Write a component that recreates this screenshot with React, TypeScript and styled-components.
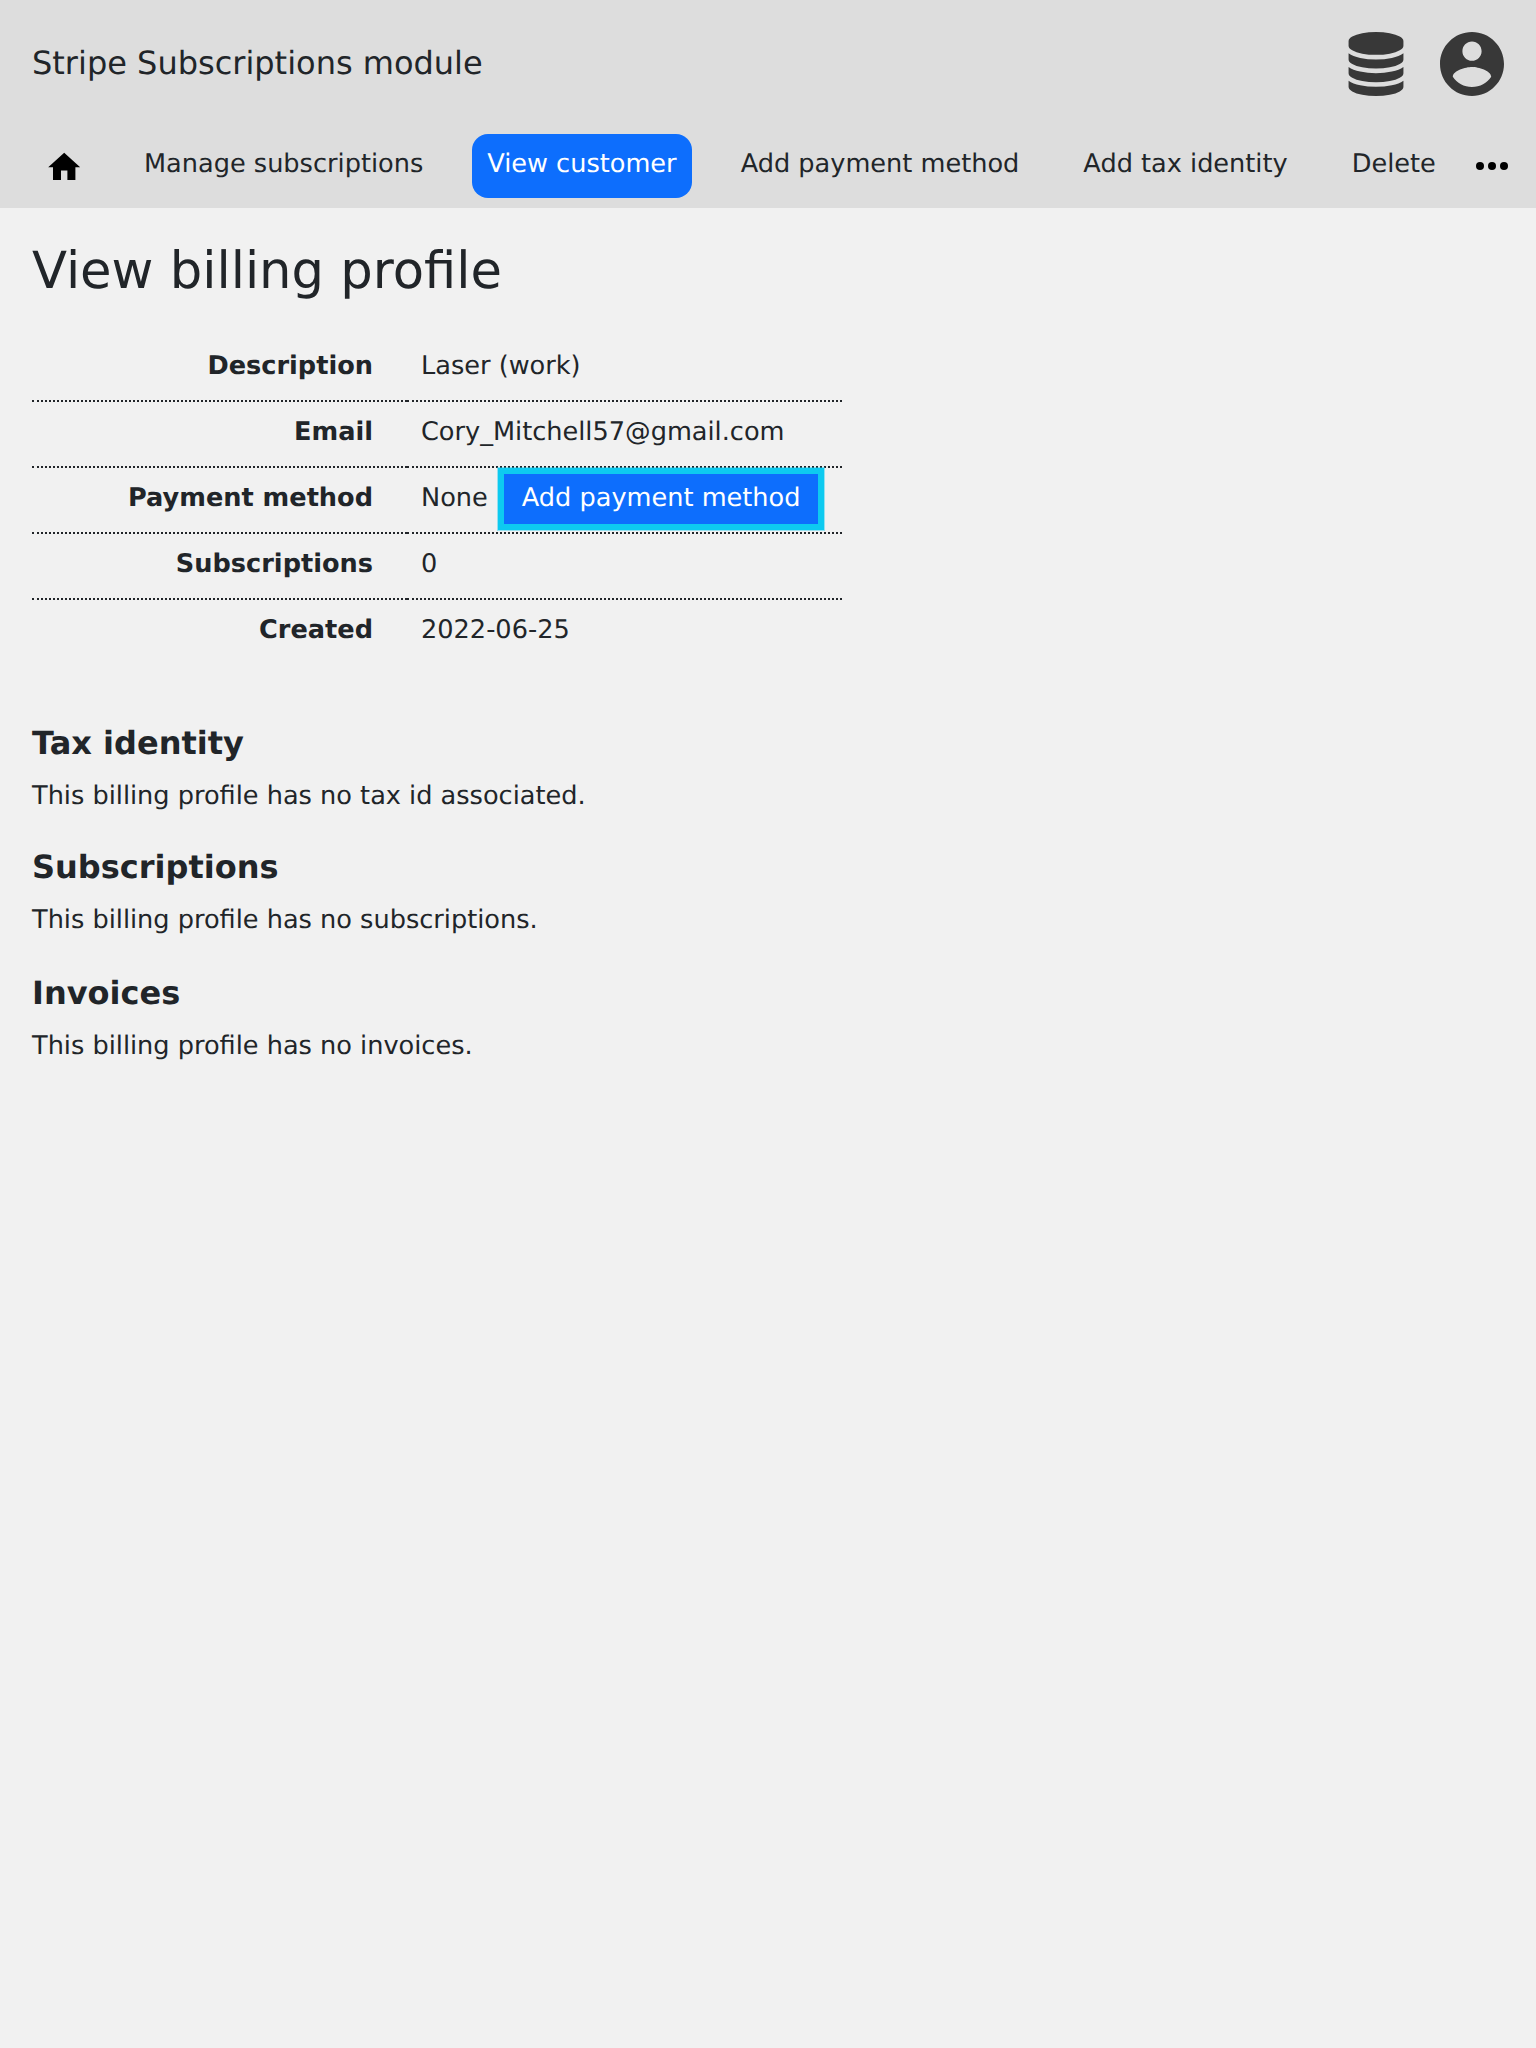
import React from "react";
import styled, { createGlobalStyle } from "styled-components";

const GlobalStyle = createGlobalStyle`
  *, *::before, *::after { box-sizing: border-box; }
  html { background: #f1f1f1; }
  body {
    margin: 0;
    background: #f1f1f1;
    color: #212529;
    font-family: "DejaVu Sans", sans-serif;
    font-size: 25.6px;
    line-height: 38.4px;
    text-rendering: geometricPrecision;
  }
`;

const Page = styled.div`
  min-height: 2048px;
`;

const Header = styled.header`
  height: 208px;
  background: #ddd;
`;

const TitleBar = styled.div`
  display: flex;
  align-items: center;
  justify-content: space-between;
  height: 134px;
  padding: 0 32px 6px;
`;

const AppTitle = styled.div`
  font-size: 32px;
  line-height: 48px;
  padding-bottom: 2px;
`;

const Tools = styled.div`
  display: flex;
  gap: 36px;
  color: #383838;
`;

const Icon = styled.svg`
  display: block;
  flex: none;
  fill: currentColor;
`;

const Nav = styled.nav`
  display: flex;
  gap: 34px;
  height: 64px;
  padding-left: 32px;
`;

const NavLink = styled.a<{ $active?: boolean }>`
  flex: none;
  height: 64px;
  padding: 0 15px;
  border-radius: 16px;
  line-height: 60px;
  white-space: nowrap;
  color: ${(p) => (p.$active ? "#fff" : "inherit")};
  background: ${(p) => (p.$active ? "#0d6efd" : "transparent")};
`;

const HomeLink = styled.a`
  flex: none;
  display: flex;
  justify-content: center;
  width: 64px;
  margin-right: -1px;
  padding-top: 14px;
  color: #000;
`;

const MoreLink = styled.a`
  flex: none;
  margin: 28px 0 0 -8.6px;
  color: #000;
`;

const Main = styled.main`
  padding: 24px 32px 0;
`;

const PageTitle = styled.h1`
  margin: 0;
  font-size: 51.2px;
  font-weight: 400;
  line-height: 78px;
`;

const Details = styled.table`
  width: 810px;
  margin-top: 25px;
  border-collapse: collapse;
  table-layout: fixed;

  tr:not(:last-child) > * {
    border-bottom: 2px dotted #212529;
  }
  th, td {
    height: 66px;
    padding-bottom: 3.6px;
  }
  tr:first-child > * {
    padding-bottom: 2.6px;
  }
  tr:last-child > * {
    padding-bottom: 4.6px;
  }
`;

const Label = styled.th`
  width: 375px;
  padding: 0 34px 0 0;
  text-align: right;
  font-weight: 700;
`;

const Value = styled.td`
  padding: 0 0 0 14px;
  white-space: nowrap;
`;

const ActionButton = styled.a`
  margin-left: 1.6px;
  padding: 9px 17.7px 11px 18.3px;
  border: 6px solid #0dcaf0;
  box-shadow: 0 0 0 1px rgba(13, 202, 240, 0.4);
  background: #0d6efd;
  color: #fff;
`;

const Section = styled.section<{ $gap: number }>`
  margin-top: ${(p) => p.$gap}px;
`;

const SectionTitle = styled.h2`
  margin: 0;
  font-size: 32px;
  font-weight: 700;
  line-height: 48px;
`;

const SectionText = styled.p`
  margin: 10px 0 0;
`;

const details: { label: string; value: React.ReactNode }[] = [
  { label: "Description", value: "Laser (work)" },
  { label: "Email", value: "Cory_Mitchell57@gmail.com" },
  {
    label: "Payment method",
    value: (
      <>
        None <ActionButton>Add payment method</ActionButton>
      </>
    ),
  },
  { label: "Subscriptions", value: "0" },
  { label: "Created", value: "2022-06-25" },
];

const sections = [
  { title: "Tax identity", text: "This billing profile has no tax id associated.", gap: 54 },
  { title: "Subscriptions", text: "This billing profile has no subscriptions.", gap: 27.6 },
  { title: "Invoices", text: "This billing profile has no invoices.", gap: 29.6 },
];

export default function App() {
  return (
    <Page>
      <GlobalStyle />
      <Header>
        <TitleBar>
          <AppTitle>Stripe Subscriptions module</AppTitle>
          <Tools>
            <Icon width="56" height="64" viewBox="0 0 1536 1792">
              <path d="M768 768q237 0 443-43t325-127v170q0 69-103 128t-280 93.5-385 34.5-385-34.5-280-93.5-103-128v-170q119 84 325 127t443 43zm0 768q237 0 443-43t325-127v170q0 69-103 128t-280 93.5-385 34.5-385-34.5-280-93.5-103-128v-170q119 84 325 127t443 43zm0-384q237 0 443-43t325-127v170q0 69-103 128t-280 93.5-385 34.5-385-34.5-280-93.5-103-128v-170q119 84 325 127t443 43zm0-1152q208 0 385 34.5t280 93.5 103 128v128q0 69-103 128t-280 93.5-385 34.5-385-34.5-280-93.5-103-128v-128q0-69 103-128t280-93.5 385-34.5z" />
            </Icon>
            <Icon width="64" height="64" viewBox="2 2 20 20">
              <path d="M12 2C6.48 2 2 6.48 2 12s4.48 10 10 10 10-4.48 10-10S17.52 2 12 2zm0 3c1.66 0 3 1.34 3 3s-1.34 3-3 3-3-1.34-3-3 1.34-3 3-3zm0 14.2c-2.5 0-4.71-1.28-6-3.22.03-1.99 4-3.08 6-3.08 1.99 0 5.97 1.09 6 3.08-1.29 1.94-3.5 3.22-6 3.22z" />
            </Icon>
          </Tools>
        </TitleBar>
        <Nav>
          <HomeLink>
            <Icon width="38.4" height="38.4" viewBox="0 0 24 24">
              <path d="M10 20v-6h4v6h5v-8h3L12 3 2 12h3v8z" />
            </Icon>
          </HomeLink>
          <NavLink>Manage subscriptions</NavLink>
          <NavLink $active>View customer</NavLink>
          <NavLink>Add payment method</NavLink>
          <NavLink>Add tax identity</NavLink>
          <NavLink>Delete</NavLink>
          <MoreLink>
            <Icon width="32" height="8" viewBox="0 0 32 8">
              <circle cx="4" cy="4" r="4" />
              <circle cx="16" cy="4" r="4" />
              <circle cx="28" cy="4" r="4" />
            </Icon>
          </MoreLink>
        </Nav>
      </Header>
      <Main>
        <PageTitle>View billing profile</PageTitle>
        <Details>
          <tbody>
            {details.map((d) => (
              <tr key={d.label}>
                <Label scope="row">{d.label}</Label>
                <Value>{d.value}</Value>
              </tr>
            ))}
          </tbody>
        </Details>
        {sections.map((s) => (
          <Section key={s.title} $gap={s.gap}>
            <SectionTitle>{s.title}</SectionTitle>
            <SectionText>{s.text}</SectionText>
          </Section>
        ))}
      </Main>
    </Page>
  );
}
